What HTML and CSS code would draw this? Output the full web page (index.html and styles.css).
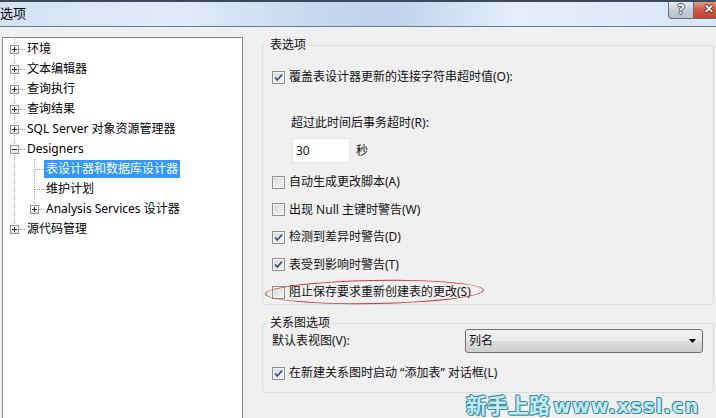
FILE: index.html
```html
<!DOCTYPE html>
<html lang="zh-CN">
<head>
    <meta charset="UTF-8">
    <meta name="viewport" content="width=device-width, initial-scale=1.0">
    <title>选项</title>
    <link rel="stylesheet" href="styles.css">
</head>
<body>
    <div class="titlebar">
        <span class="title">选项</span>
        <div class="caption-buttons">
            <span class="cap-help">?</span>
            <span class="cap-close">✕</span>
        </div>
    </div>

    <div class="main">
        <div class="tree">
            <div class="node"><span class="exp first"><span class="box"></span><span class="stub"></span></span><span class="label">环境</span></div>
            <div class="node"><span class="exp"><span class="box"></span><span class="stub"></span></span><span class="label">文本编辑器</span></div>
            <div class="node"><span class="exp"><span class="box"></span><span class="stub"></span></span><span class="label">查询执行</span></div>
            <div class="node"><span class="exp"><span class="box"></span><span class="stub"></span></span><span class="label">查询结果</span></div>
            <div class="node"><span class="exp"><span class="box"></span><span class="stub"></span></span><span class="label">SQL Server 对象资源管理器</span></div>
            <div class="node"><span class="exp"><span class="box minus"></span><span class="stub"></span></span><span class="label">Designers</span></div>
            <div class="node"><span class="indent"></span><span class="exp sub"><span class="stub leaf"></span></span><span class="label selected">表设计器和数据库设计器</span></div>
            <div class="node"><span class="indent"></span><span class="exp sub"><span class="stub leaf"></span></span><span class="label">维护计划</span></div>
            <div class="node"><span class="indent"></span><span class="exp sub last"><span class="box"></span><span class="stub"></span></span><span class="label">Analysis Services 设计器</span></div>
            <div class="node"><span class="exp last"><span class="box"></span><span class="stub"></span></span><span class="label">源代码管理</span></div>
        </div>

        <div class="options">
            <fieldset class="group group-table">
                <legend>表选项</legend>
                <div class="row first-row">
                    <span class="cb checked"><svg viewBox="0 0 11 11"><path d="M2 5.5 L4.3 8 L9 2.5"/></svg></span>
                    <span>覆盖表设计器更新的连接字符串超时值(O):</span>
                </div>
                <div class="row timeout-label">超过此时间后事务超时(R):</div>
                <div class="timeout">
                    <input class="textbox" type="text" value="30">
                    <span>秒</span>
                </div>
                <div class="checks">
                    <div class="row"><span class="cb"></span><span>自动生成更改脚本(A)</span></div>
                    <div class="row"><span class="cb"></span><span>出现 Null 主键时警告(W)</span></div>
                    <div class="row"><span class="cb checked"><svg viewBox="0 0 11 11"><path d="M2 5.5 L4.3 8 L9 2.5"/></svg></span><span>检测到差异时警告(D)</span></div>
                    <div class="row"><span class="cb checked"><svg viewBox="0 0 11 11"><path d="M2 5.5 L4.3 8 L9 2.5"/></svg></span><span>表受到影响时警告(T)</span></div>
                    <div class="row marked"><span class="cb"></span><span>阻止保存要求重新创建表的更改(S)</span><span class="ellipse"></span></div>
                </div>
            </fieldset>

            <fieldset class="group group-diagram">
                <legend>关系图选项</legend>
                <div class="combo-row">
                    <span>默认表视图(V):</span>
                    <div class="combo">
                        <span>列名</span>
                        <svg class="combo-arrow" width="7" height="4" viewBox="0 0 7 4"><path d="M0 0h7L3.5 4z"/></svg>
                    </div>
                </div>
                <div class="row last-row">
                    <span class="cb checked"><svg viewBox="0 0 11 11"><path d="M2 5.5 L4.3 8 L9 2.5"/></svg></span>
                    <span>在新建关系图时启动 “添加表” 对话框(L)</span>
                </div>
            </fieldset>
        </div>
    </div>

    <div class="watermark"><span class="wm-cn">新手上路</span> <span class="wm-url">www.xssl.cn</span></div>
</body>
</html>
```

FILE: styles.css
```css
body {
    font-family: "Noto Sans", "Noto Sans CJK SC", sans-serif;
    font-size: 12px;
    line-height: 16px;
    margin: 0;
    width: 716px;
    height: 418px;
    overflow: hidden;
    background-color: #f0f0f0;
    color: #111;
    position: relative;
}

/* window caption */
.titlebar {
    display: flex;
    height: 24px;
    border-top: 2px solid #3a4b5d;
    border-bottom: 1px solid #6d7d8e;
    background: linear-gradient(90deg, #d3e3f4 0%, #dfebf8 25%, #c4d8ee 45%, #bed4ec 55%, #e2eefa 72%, #d8e6f6 100%);
    overflow: hidden;
}

.title {
    margin-left: 0;
    line-height: 23px;
    font-size: 13px;
    color: #000;
}

.caption-buttons {
    display: flex;
    margin-left: auto;
    margin-right: -8px;
    margin-top: -2px;
    align-self: flex-start;
}

.cap-help,
.cap-close {
    height: 18px;
    display: flex;
    align-items: center;
    justify-content: center;
    border: 1px solid #5f6f80;
    border-top: none;
}

.cap-help {
    width: 24px;
    border-radius: 0 0 0 4px;
    background: linear-gradient(#eef2f6, #c6ced8 55%, #b8c2ce);
    color: #f8f8f8;
    font-size: 14px;
    font-weight: bold;
    text-shadow: 1px 0 #44556a, -1px 0 #44556a, 0 1px #44556a, 0 -1px #44556a;
}

.cap-close {
    width: 29px;
    border-left: none;
    background: linear-gradient(#e9a897, #d0604a 50%, #c0412c);
    color: #fff;
    font-size: 12px;
    font-weight: bold;
    text-shadow: 1px 0 #5a1a10, -1px 0 #5a1a10, 0 1px #5a1a10, 0 -1px #5a1a10;
}

.main {
    display: flex;
    padding-top: 10px;
}

/* navigation tree */
.tree {
    margin-left: 2px;
    width: 239px;
    height: 380px;
    padding-top: 1px;
    border: 1px solid #828790;
    border-bottom: none;
    background-color: #ffffff;
    flex: none;
}

.node {
    display: flex;
    align-items: center;
    height: 20px;
    color: #000;
}

.indent,
.exp {
    display: flex;
    align-items: center;
    height: 20px;
    flex: none;
    background-image: linear-gradient(#a3a3a3 1px, transparent 1px);
    background-size: 1px 2px;
    background-repeat: repeat-y;
    background-position: 11px 0;
}

.indent {
    width: 20px;
}

.exp {
    width: 22px;
}

.exp.sub {
    width: 21px;
}

.exp.last {
    background-image: linear-gradient(transparent 10px, #fff 10px), linear-gradient(#a3a3a3 1px, transparent 1px);
    background-size: 100% 100%, 1px 2px;
    background-repeat: no-repeat, repeat-y;
    background-position: 0 0, 11px 0;
}

.box {
    width: 9px;
    height: 9px;
    margin-left: 7px;
    box-sizing: border-box;
    border: 1px solid #939393;
    flex: none;
    background:
        linear-gradient(#2a2a2a, #2a2a2a) center / 5px 1px no-repeat,
        linear-gradient(#2a2a2a, #2a2a2a) center / 1px 5px no-repeat,
        linear-gradient(#ffffff, #e4e4e4);
}

.box.minus {
    background:
        linear-gradient(#2a2a2a, #2a2a2a) center / 5px 1px no-repeat,
        linear-gradient(#ffffff, #e4e4e4);
}

.stub {
    flex: 1;
    height: 0;
    margin-top: 1px;
    border-top: 1px dotted #a3a3a3;
}

.stub.leaf {
    margin-left: 12px;
}

.label {
    padding: 0 2px;
    line-height: 18px;
    white-space: nowrap;
}

.label.selected {
    background-color: #3399ff;
    color: #ffffff;
}

/* option groups */
.options {
    margin-left: 19px;
    width: 452px;
    flex: none;
}

.group {
    margin: 0;
    padding: 0 10px 0 9px;
    border: 1px solid #d5dfe5;
    border-radius: 3px;
    min-width: 0;
}

.group legend {
    padding: 0 2px;
    margin-left: -4px;
    line-height: 16px;
}

.group-table {
    padding-bottom: 2px;
}

.group-diagram {
    margin-top: 10px;
    padding-bottom: 9px;
}

.row {
    display: flex;
    align-items: center;
    gap: 4px;
    height: 20px;
    white-space: nowrap;
}

.first-row {
    margin-top: 14px;
}

.timeout-label {
    margin-top: 26px;
    padding-left: 19px;
}

.timeout {
    display: flex;
    align-items: center;
    gap: 6px;
    margin-top: 5px;
    padding-left: 20px;
}

.textbox {
    width: 58px;
    height: 25px;
    box-sizing: border-box;
    border: 1px solid #e2e6ea;
    background-color: #ffffff;
    padding: 0 3px;
    font-family: "Noto Sans", "Noto Sans CJK SC", sans-serif;
    font-size: 12px;
    color: #111;
}

.checks {
    display: flex;
    flex-direction: column;
    gap: 7.5px;
    margin-top: 9px;
}

.cb {
    width: 11px;
    height: 11px;
    flex: none;
    border: 1px solid #8e8f8f;
    background: linear-gradient(135deg, #d4d7dc, #f6f6f6);
    box-shadow: inset 0 0 0 1px #f4f4f4;
    display: flex;
}

.cb svg {
    width: 11px;
    height: 11px;
}

.cb svg path {
    fill: none;
    stroke: #3f4f6e;
    stroke-width: 1.8;
}

.marked {
    position: relative;
}

.ellipse {
    position: absolute;
    left: -7px;
    top: -2px;
    width: 217px;
    height: 22px;
    border: 1px solid #c53a3a;
    border-radius: 50%;
    transform: rotate(-1deg);
}

.combo-row {
    display: flex;
    align-items: center;
    justify-content: space-between;
    margin-top: -2px;
}

.combo {
    width: 238px;
    height: 24px;
    box-sizing: border-box;
    display: flex;
    align-items: center;
    justify-content: space-between;
    padding: 0 6px 0 3px;
    border: 1px solid #707070;
    border-radius: 3px;
    background: linear-gradient(#f2f2f2 0%, #ebebeb 50%, #dddddd 51%, #cfcfcf 100%);
}

.combo-arrow path {
    fill: #000;
}

.last-row {
    margin-top: 10px;
}

/* site watermark */
.watermark {
    position: absolute;
    left: 466px;
    top: 391px;
    white-space: nowrap;
    color: #c2ecf5;
    font-weight: bold;
    text-shadow: 1px 0 #3a8aa2, -1px 0 #3a8aa2, 0 1px #3a8aa2, 0 -1px #3a8aa2, 1px 1px #3a8aa2, -1px -1px #3a8aa2;
}

.wm-cn {
    font-family: "Noto Sans CJK SC", sans-serif;
    font-size: 21px;
    line-height: 26px;
}

.wm-url {
    font-family: "DejaVu Sans", sans-serif;
    font-size: 19px;
    line-height: 26px;
    letter-spacing: 1.3px;
}
```
